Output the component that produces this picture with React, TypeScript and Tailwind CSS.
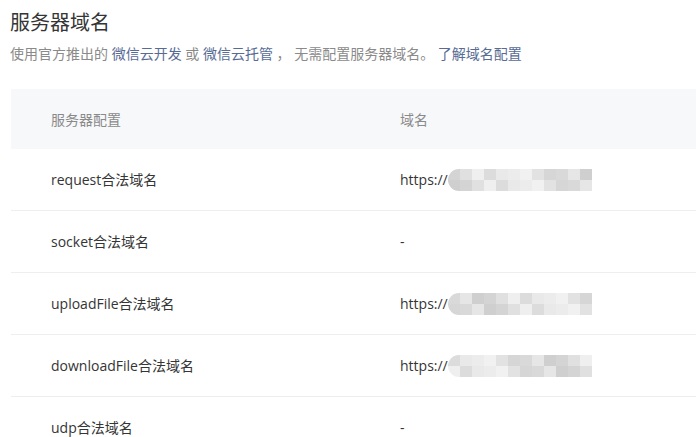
import React from "react";

const FONT = { fontFamily: '"Open Sans", "Noto Sans CJK SC", sans-serif' };

function Mosaic({ seed }: { seed: number }) {
  const shades = ["#dcdcdc", "#e6e6e6", "#ececec", "#d4d4d4", "#e2e2e2", "#efefef", "#d9d9d9", "#e9e9e9", "#cfcfcf", "#f1f1f1", "#e0e0e0", "#d6d6d6"];
  const cells = [] as React.ReactNode[];
  for (let r = 0; r < 2; r++) {
    for (let c = 0; c < 12; c++) {
      const idx = (c * 7 + r * 5 + seed * 3) % shades.length;
      cells.push(<div key={r + "-" + c} style={{ background: shades[idx] }} />);
    }
  }
  return (
    <div className="grid h-[22px] w-[144px] grid-cols-[repeat(12,12px)] grid-rows-2 overflow-hidden rounded-l-[11px]">
      {cells}
    </div>
  );
}

const rows: { name: string; value: "url" | "-"; seed: number }[] = [
  { name: "request合法域名", value: "url", seed: 1 },
  { name: "socket合法域名", value: "-", seed: 0 },
  { name: "uploadFile合法域名", value: "url", seed: 2 },
  { name: "downloadFile合法域名", value: "url", seed: 4 },
  { name: "udp合法域名", value: "-", seed: 0 },
];

export default function App() {
  return (
    <div className="h-[437px] w-[696px] overflow-hidden bg-white" style={FONT}>
      <div className="pl-[10px] pt-[10px]">
        <h1 className="text-[20px] leading-[26px] text-[#353535]">服务器域名</h1>
        <p className="mt-[8px] text-[14px] leading-[20px] text-[#8a8a8a]">
          使用官方推出的 <span className="text-[#576b95]">微信云开发</span> 或{" "}
          <span className="text-[#576b95]">微信云托管</span> ， 无需配置服务器域名。{" "}
          <span className="text-[#576b95]">了解域名配置</span>
        </p>
      </div>
      <div className="ml-[11px] mt-[25px]">
        <div className="flex h-[60px] items-center bg-[#f7f8fa] text-[14px] text-[#8a8a8a]">
          <div className="w-[389px] pl-[40px]">服务器配置</div>
          <div>域名</div>
        </div>
        {rows.map((r, i) => (
          <div
            key={i}
            className="flex h-[62px] items-center border-b border-[#eeeeee] text-[14px] text-[#353535]"
          >
            <div className="w-[389px] pl-[40px]">{r.name}</div>
            <div className="flex items-center">
              {r.value === "url" ? (
                <>
                  <span>https://</span>
                  <Mosaic seed={r.seed} />
                </>
              ) : (
                <span>-</span>
              )}
            </div>
          </div>
        ))}
      </div>
    </div>
  );
}
